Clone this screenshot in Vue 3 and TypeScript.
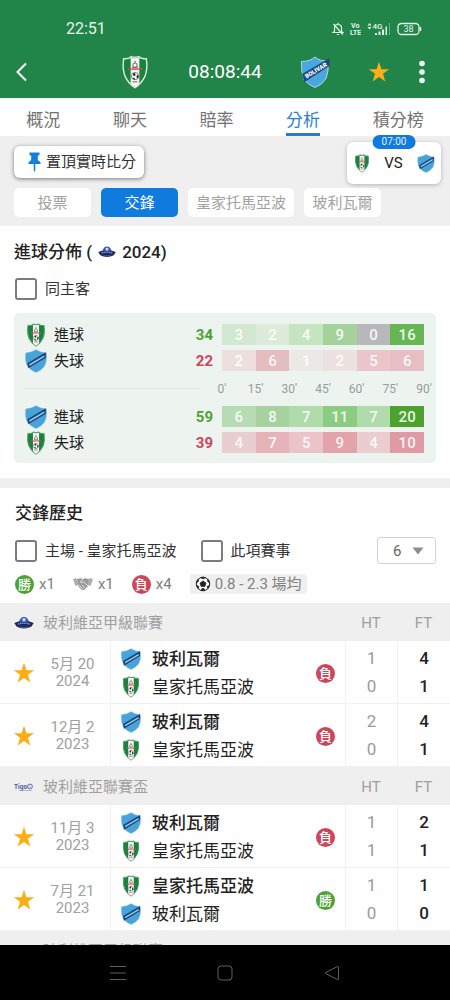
<script setup lang="ts">
import { ref } from 'vue'

type Team = 'tomayapo' | 'bolivar'

const names: Record<Team, string> = { tomayapo: '皇家托馬亞波', bolivar: '玻利瓦爾' }

const tabs = ['概況', '聊天', '賠率', '分析', '積分榜']
const activeTab = ref('分析')

const filters = ['投票', '交鋒', '皇家托馬亞波', '玻利瓦爾']
const activeFilter = ref('交鋒')

interface Heat {
  team: Team
  label: string
  kind: 'for' | 'against'
  total: number
  cells: [number, string][]
}

const upper: Heat[] = [
  {
    team: 'tomayapo', label: '進球', kind: 'for', total: 34,
    cells: [[3, '#d3e8d0'], [2, '#dcebda'], [4, '#c5e4c0'], [9, '#a4d29a'], [0, '#b8b8ba'], [16, '#66b653']],
  },
  {
    team: 'bolivar', label: '失球', kind: 'against', total: 22,
    cells: [[2, '#ecdfde'], [6, '#e4bdc0'], [1, '#ebe9e6'], [2, '#ece2e0'], [5, '#eac6cb'], [6, '#e6bec3']],
  },
]
const lower: Heat[] = [
  {
    team: 'bolivar', label: '進球', kind: 'for', total: 59,
    cells: [[6, '#b6dcb3'], [8, '#a6d2a1'], [7, '#b0dbab'], [11, '#8bcb82'], [7, '#b0dbab'], [20, '#4ba32d']],
  },
  {
    team: 'tomayapo', label: '失球', kind: 'against', total: 39,
    cells: [[4, '#e8ced0'], [7, '#e6b3b8'], [5, '#ebc4c9'], [9, '#e3a3aa'], [4, '#e9cdd0'], [10, '#e09aa3']],
  },
]
const minutes = ["0'", "15'", "30'", "45'", "60'", "75'", "90'"]

interface Match {
  day: string
  year: string
  result: '勝' | '負'
  sides: { team: Team; ht: number; ft: number }[]
}

const leagues: { name: string; logo: string; matches: Match[] }[] = [
  {
    name: '玻利維亞甲級聯賽', logo: 'league',
    matches: [
      { day: '5月 20', year: '2024', result: '負', sides: [{ team: 'bolivar', ht: 1, ft: 4 }, { team: 'tomayapo', ht: 0, ft: 1 }] },
      { day: '12月 2', year: '2023', result: '負', sides: [{ team: 'bolivar', ht: 2, ft: 4 }, { team: 'tomayapo', ht: 0, ft: 1 }] },
    ],
  },
  {
    name: '玻利維亞聯賽盃', logo: 'tigo',
    matches: [
      { day: '11月 3', year: '2023', result: '負', sides: [{ team: 'bolivar', ht: 1, ft: 2 }, { team: 'tomayapo', ht: 1, ft: 1 }] },
      { day: '7月 21', year: '2023', result: '勝', sides: [{ team: 'tomayapo', ht: 1, ft: 1 }, { team: 'bolivar', ht: 0, ft: 0 }] },
    ],
  },
  { name: '玻利維亞甲級聯賽', logo: 'league', matches: [] },
]

const sameVenue = ref(false)
const homeOnly = ref(false)
const thisCompetition = ref(false)
const count = ref('6')
</script>

<template>
  <div class="screen">
    <svg class="defs" aria-hidden="true">
      <symbol id="tomayapo" viewBox="0 0 26 33">
        <path class="edge" d="M2 3.5Q7.500 4 9.500 1.500Q13 3 16.500 1.500Q18.500 4 24 3.500Q25.500 14 22.500 21Q19.500 27.500 13 31.800Q6.500 27.500 3.500 21Q.5 14 2 3.500Z" fill="#17843c" stroke-width="1.400" />
        <path d="M8.800 2.500Q13 3.800 17.200 2.500V27.500Q15.500 30 13 31.300Q10.500 30 8.800 27.500Z" fill="#f4f5f1" />
        <path d="M11 9Q13 6.500 15 9M11 9.500V12H15V9.500M12.300 6.500H14" fill="none" stroke="#77655b" stroke-width="1.100" />
        <path d="M6 13.700H20" stroke="#d8474f" stroke-width="1.400" />
        <circle cx="13" cy="20.500" r="3.500" fill="#fff" stroke="#555" stroke-width=".7" />
        <path d="M11 18L13 17.400L13.600 19.600L11.600 20.600ZM14.500 20L16.300 19.500V22L14.700 22.600ZM10.500 22L12.500 22.400L13.200 24L11.500 23.600Z" fill="#222" />
        <path d="M10.500 26H15.500" stroke="#a55" />
      </symbol>
      <symbol id="bolivar" viewBox="0 0 30 33">
        <path d="M1 5.500Q9 5 15 1Q21 5 29 5.500Q30.500 18 26 24.500Q21.500 30 15 32.300Q8.500 30 4 24.500Q-.5 18 1 5.500Z" fill="#48a3da" stroke="#6fb4dc" stroke-width=".7" />
        <path d="M3 19.500L28.500 4.500V12L4.500 26.500Z" fill="#1d4478" />
        <path d="M6 22L26.500 9.800" stroke="#8fcdf0" stroke-width="2.200" />
      </symbol>
      <symbol id="league" viewBox="0 0 20 12">
        <path d="M.3 6Q10 1.500 19.700 6L17.500 9.500Q10 13.500 2.500 9.500Z" fill="#20265d" />
        <path d="M5 5.500Q6 0 10 0Q14 0 15 5.500Z" fill="#2d56ae" />
        <circle cx="10" cy="2.800" r="1.800" fill="#c3d9f4" />
        <path d="M4 7.200Q10 5.300 16 7.200" fill="none" stroke="#8797cc" stroke-width="1.400" stroke-dasharray="1.500 .6" />
        <path d="M6 9.900Q10 11 14 9.900" fill="none" stroke="#476fae" stroke-width=".8" />
      </symbol>
      <symbol id="tigo" viewBox="0 0 20 12">
        <text x="0" y="8" font-family="Roboto, sans-serif" font-size="6.500" font-weight="700" fill="#515a9c">Tigo</text>
        <circle cx="16" cy="5.500" r="2.400" fill="#e8eaf4" stroke="#626ba8" stroke-width="1" />
        <path d="M14.800 4.500L17 6.500M5 9.500H18" stroke="#8c92bc" stroke-width=".6" />
      </symbol>
      <symbol id="star" viewBox="0 0 22 22">
        <path d="M11 .8L13.500 8.200H21.200L15 12.800L17.300 20.600L11 16L4.700 20.600L7 12.800L.8 8.200H8.500Z" fill="#fbaf17" />
      </symbol>
    </svg>

    <header class="top">
      <div class="status">
        <span class="clock">22:51</span>
        <div class="signals">
          <svg width="12" height="14" viewBox="0 0 12 14" fill="none" stroke="#e4f6e8" stroke-width="1.200">
            <path d="M2.500 9.500V6Q2.500 2.500 6 2.500Q9.500 2.500 9.500 6V9.500L11 10.500H1L2.500 9.500M6 .8V2.500M4.800 12.500H7.200M1.500 2L10.800 12.500" />
          </svg>
          <svg width="11" height="14" viewBox="0 0 11 14" fill="#e4f6e8" font-family="Roboto, sans-serif" font-weight="700" font-size="7">
            <text x="1" y="6">Vo</text>
            <text x="0" y="13">LTE</text>
          </svg>
          <svg width="24" height="14" viewBox="0 0 24 14" fill="#e4f6e8">
            <path d="M2.500 1L4.500 3.500H.5ZM2.500 7.500L.5 5H4.500ZM8 11H10V13H8ZM11.500 9.500H13.500V13H11.500ZM15 7.500H17V13H15ZM18.500 4.500H20V13H18.500Z" />
            <path d="M22 1H23V13H22Z" opacity=".35" />
            <text x="5.500" y="7" font-family="Roboto, sans-serif" font-size="8" font-weight="500">4G</text>
          </svg>
          <svg width="25" height="14" viewBox="0 0 25 14">
            <rect x="1" y="1.500" width="21" height="11" rx="3.500" fill="none" stroke="#e4f6e8" stroke-width="1.300" />
            <path d="M23.500 5V9" stroke="#e4f6e8" stroke-width="1.500" />
            <text x="11.500" y="10" text-anchor="middle" fill="#e4f6e8" font-family="Roboto, sans-serif" font-size="9">38</text>
          </svg>
        </div>
      </div>
      <div class="appbar">
        <button class="icon" aria-label="返回">
          <svg width="12" height="20" viewBox="0 0 12 20"><path d="M10 1.500L1.500 10L10 18.500" fill="none" stroke="#fff" stroke-width="2" /></svg>
        </button>
        <div class="fixture">
          <svg width="30" height="34"><use href="#tomayapo" /></svg>
          <span>08:08:44</span>
          <svg width="30" height="34" viewBox="0 0 30 33">
            <path d="M1.500 6Q10 6 15 1.500Q20 6 28 5.500Q29 16 26 23Q22 29.500 15 32Q8 29.500 4 24Q1 17 1.500 6Z" fill="#48a7df" stroke="#b2d8e8" />
            <path d="M2 18.500L29.500 2.500V10.500L4.500 26.500Z" fill="#1b4a7d" />
            <text x="16" y="17" transform="rotate(-31 16 15)" text-anchor="middle" font-family="Roboto, sans-serif" font-size="6" font-weight="900" fill="#fff">BOLIVAR</text>
          </svg>
        </div>
        <div class="actions">
          <button class="icon" aria-label="收藏"><svg width="22" height="22"><use href="#star" /></svg></button>
          <button class="icon" aria-label="更多">
            <svg width="8" height="24" viewBox="0 0 8 24" fill="#f2fff4"><circle cx="4" cy="3.500" r="2.800" /><circle cx="4" cy="12" r="2.800" /><circle cx="4" cy="20.500" r="2.800" /></svg>
          </button>
        </div>
      </div>
    </header>

    <nav class="tabs">
      <button v-for="t in tabs" :key="t" :class="{ active: t === activeTab }" @click="activeTab = t"><span>{{ t }}</span></button>
    </nav>

    <main>
      <section class="filterbar">
        <div class="pinrow">
          <button class="pin">
            <svg width="13" height="20" viewBox="0 0 13 20" fill="#1480d8"><path d="M1.500.5H11.500V3L9.800 3.800V8L12.500 10.300V12H7.300V18L6.500 20L5.700 18V12H.5V10.300L3.200 8V3.800L1.500 3Z" /></svg>
            置頂實時比分
          </button>
          <div class="mini">
            <span class="kickoff">07:00</span>
            <svg width="16" height="19"><use href="#tomayapo" /></svg>
            <span>VS</span>
            <svg width="18" height="19"><use href="#bolivar" /></svg>
          </div>
        </div>
        <div class="chips">
          <button v-for="f in filters" :key="f" :class="{ active: f === activeFilter }" @click="activeFilter = f">{{ f }}</button>
        </div>
      </section>

      <section class="goals">
        <h2>進球分佈 ( <svg width="18" height="12"><use href="#league" /></svg> 2024)</h2>
        <label class="check"><input v-model="sameVenue" type="checkbox" />同主客</label>
        <div class="panel">
          <table class="heat">
            <colgroup><col class="c-team" /><col class="c-total" /><col v-for="n in 6" :key="n" /></colgroup>
            <tbody>
              <tr v-for="row in upper" :key="row.label">
                <th scope="row"><div class="side"><svg width="24" height="24"><use :href="'#' + row.team" /></svg>{{ row.label }}</div></th>
                <td :class="['total', row.kind]">{{ row.total }}</td>
                <td v-for="(c, i) in row.cells" :key="i" class="cell" :style="{ background: c[1] }">{{ c[0] }}</td>
              </tr>
              <tr>
                <td colspan="2"><hr /></td>
                <td colspan="6"><div class="axis"><span v-for="m in minutes" :key="m">{{ m }}</span></div></td>
              </tr>
              <tr v-for="row in lower" :key="row.label">
                <th scope="row"><div class="side"><svg width="24" height="24"><use :href="'#' + row.team" /></svg>{{ row.label }}</div></th>
                <td :class="['total', row.kind]">{{ row.total }}</td>
                <td v-for="(c, i) in row.cells" :key="i" class="cell" :style="{ background: c[1] }">{{ c[0] }}</td>
              </tr>
            </tbody>
          </table>
        </div>
      </section>

      <section class="history">
        <h2>交鋒歷史</h2>
        <div class="options">
          <label class="check"><input v-model="homeOnly" type="checkbox" />主場 - 皇家托馬亞波</label>
          <label class="check"><input v-model="thisCompetition" type="checkbox" />此項賽事</label>
          <div class="picker">
            <select v-model="count" aria-label="場數"><option>6</option><option>10</option><option>20</option></select>
            <svg width="12" height="8" viewBox="0 0 12 8"><path d="M.5.5H11.500L6 7.500Z" fill="#8d8d8d" /></svg>
          </div>
        </div>
        <div class="summary">
          <span class="tally"><i class="badge win">勝</i>x1</span>
          <span class="tally">
            <svg width="20" height="14" viewBox="0 0 20 14">
              <path d="M0 2L3.500 1L4.500 8L2.500 9ZM20 2L16.500 1L15.500 8L17.500 9Z" fill="#aaa" />
              <path d="M4 2L8 1.200L10 2L12 1.200L16 2L15.500 8.500L11 13L9 13L4.500 8.500Z" fill="#999" />
              <path d="M10 2L7.300 5Q8.300 6.500 10.500 4.800L15 9M9 8L12 11M6.500 8.500L10 12M5 7.500L7 9.500" fill="none" stroke="#f5f5f5" stroke-width=".8" />
            </svg>x1</span>
          <span class="tally"><i class="badge loss">負</i>x4</span>
          <span class="average">
            <svg width="16" height="16" viewBox="0 0 16 16">
              <circle cx="8" cy="8" r="6.700" fill="#fff" stroke="#222" stroke-width="1" />
              <path d="M8 4.900L11 7L9.900 10.500H6.100L5 7ZM5.500 1.600L8 3L10.500 1.600L8 1ZM1.300 7L3.500 5.300L3.300 3L1.500 5.500ZM14.700 7L12.500 5.300L12.700 3L14.500 5.500ZM3 12.500L4 10.500L1.600 9.500ZM13 12.500L12 10.500L14.400 9.500ZM6 14.600L7 12.500H9L10 14.600Z" fill="#222" stroke="#222" stroke-width=".7" />
            </svg>
            0.8 - 2.3 場均
          </span>
        </div>

        <table class="matches">
          <colgroup><col class="c-date" /><col /><col class="c-ht" /><col class="c-ft" /></colgroup>
          <tbody v-for="(league, k) in leagues" :key="k">
            <tr class="league">
              <th colspan="2" scope="colgroup"><div class="league-name"><svg width="20" height="12"><use :href="'#' + league.logo" /></svg>{{ league.name }}</div></th>
              <th scope="col">HT</th>
              <th scope="col">FT</th>
            </tr>
            <tr v-for="m in league.matches" :key="m.day" class="match">
              <td>
                <div class="when">
                  <button class="icon" aria-label="收藏"><svg width="22" height="22"><use href="#star" /></svg></button>
                  <time>{{ m.day }}<br />{{ m.year }}</time>
                </div>
              </td>
              <td>
                <div class="game">
                  <div class="teams">
                    <div v-for="(s, i) in m.sides" :key="s.team" :class="{ strong: i === 0 }"><svg width="20" height="22"><use :href="'#' + s.team" /></svg>{{ names[s.team] }}</div>
                  </div>
                  <i :class="['badge', m.result === '勝' ? 'win' : 'loss']">{{ m.result }}</i>
                </div>
              </td>
              <td class="score half"><div v-for="s in m.sides" :key="s.team">{{ s.ht }}</div></td>
              <td class="score full"><div v-for="s in m.sides" :key="s.team">{{ s.ft }}</div></td>
            </tr>
          </tbody>
        </table>
      </section>
    </main>

    <footer class="sysnav">
      <button class="icon" aria-label="選單"><svg width="16" height="16" viewBox="0 0 16 16"><path d="M0 1.500H16M0 8H16M0 14.500H16" stroke="#5e5e5e" /></svg></button>
      <button class="icon" aria-label="主頁"><svg width="16" height="16" viewBox="0 0 16 16"><rect x="1" y="1" width="14" height="14" rx="3" fill="none" stroke="#5e5e5e" /></svg></button>
      <button class="icon" aria-label="上一頁"><svg width="16" height="16" viewBox="0 0 16 16"><path d="M14.500 2V14Q14.500 15 13.500 14.500L1.500 8.500Q1 8 1.500 7.500L13.500 1.500Q14.500 1 14.500 2Z" fill="none" stroke="#5e5e5e" /></svg></button>
    </footer>
  </div>
</template>

<style>
body {
  margin: 0;
}
</style>

<style scoped>
.screen {
  display: flex;
  flex-direction: column;
  height: 100vh;
  overflow: hidden;
  background: #efefef;
  color: #222;
  font: 15px/20px Roboto, "Noto Sans CJK TC", sans-serif;
}
.defs {
  position: absolute;
  width: 0;
  height: 0;
}
.edge {
  stroke: var(--crest-edge, #4f9c68);
}
button {
  border: 0;
  padding: 0;
  margin: 0;
  background: none;
  color: inherit;
  font: inherit;
  cursor: pointer;
}
svg {
  display: block;
  flex: none;
}
.icon {
  display: flex;
}
.top {
  flex: none;
  background: #218448;
  color: #fff;
}
.status {
  display: flex;
  align-items: center;
  justify-content: space-between;
  padding: 19px 28px 6px 66px;
}
.clock {
  font-size: 16px;
  color: #e4f6e8;
}
.signals {
  display: flex;
  gap: 6px;
}
.appbar {
  display: grid;
  grid-template-columns: 1fr auto 1fr;
  align-items: center;
  height: 53px;
  padding: 0 16px;
}
.fixture {
  --crest-edge: #d9eadb;
  display: flex;
  align-items: center;
  gap: 38px;
  font-size: 19px;
}
.actions {
  display: flex;
  align-items: center;
  justify-content: flex-end;
  gap: 28px;
  padding-right: 8px;
}
.tabs {
  display: flex;
  flex: none;
  background: #fff;
  font-size: 17px;
  color: #737373;
}
.tabs button {
  flex: 1 1 auto;
  display: flex;
  justify-content: center;
}
.tabs span {
  line-height: 20px;
  padding: 12px 0 3px;
  border-bottom: 3px solid transparent;
}
.tabs .active span {
  color: #2a7fcb;
  border-color: #2a7cc4;
}
main {
  flex: 1 1 0;
  min-height: 0;
  overflow-y: auto;
  scrollbar-width: none;
  margin-top: -4px;
  padding-top: 4px;
}
.filterbar {
  padding: 6px 9px 9px 14px;
}
.pinrow {
  display: flex;
  justify-content: space-between;
  align-items: flex-start;
}
.pin {
  display: flex;
  align-items: center;
  gap: 5px;
  height: 32px;
  margin-top: 4px;
  padding: 0 8px 0 14px;
  border-radius: 6px;
  background: #fff;
  box-shadow: 0 1px 4px #00000080;
  color: #333;
}
.mini {
  position: relative;
  display: flex;
  align-items: center;
  justify-content: space-between;
  box-sizing: border-box;
  width: 94px;
  height: 42px;
  padding: 0 6px 0 7px;
  border-radius: 6px;
  background: #fff;
  box-shadow: 0 1px 4px #00000040;
}
.kickoff {
  position: absolute;
  top: -7px;
  left: 50%;
  transform: translateX(-50%);
  padding: 0 9px;
  border-radius: 7px;
  background: #0f7bdc;
  color: #e3f1ff;
  font-size: 10px;
  line-height: 14px;
}
.chips {
  display: flex;
  gap: 10px;
  margin-top: 4px;
}
.chips button {
  min-width: 77px;
  height: 29px;
  padding: 0 8px;
  border-radius: 5px;
  background: #fff;
  color: #a2a2a2;
  white-space: nowrap;
}
.chips .active {
  background: #0f7bdc;
  color: #fff;
}
.goals,
.history {
  background: #fff;
}
.goals {
  padding: 15px 14px 15px;
  margin-bottom: 10px;
}
h2 {
  display: flex;
  align-items: center;
  gap: 6px;
  margin: 0;
  font-size: 17px;
  line-height: 22px;
  font-weight: 500;
}
.check {
  display: flex;
  align-items: center;
  gap: 8px;
  color: #333;
}
.check input {
  appearance: none;
  box-sizing: border-box;
  width: 22px;
  height: 22px;
  margin: 0;
  border: 2px solid #7c7c7c;
  border-radius: 3px;
  background: #fff;
}
.check input:checked {
  background: #0f7bdc;
}
.goals .check {
  margin: 15px 1px 13px;
}
.panel {
  padding: 6px 12px 5px 10px;
  border-radius: 5px;
  background: #edf4f0;
}
table {
  width: 100%;
  table-layout: fixed;
}
th,
td {
  padding: 0;
  font-weight: 400;
}
.heat {
  border-spacing: 0 5px;
}
.c-team {
  width: 152px;
}
.c-total {
  width: 46px;
}
.side {
  display: flex;
  align-items: center;
  gap: 6px;
  height: 21px;
}
.total {
  padding-right: 9px;
  text-align: right;
  font-weight: 700;
}
.for {
  color: #4ba336;
}
.against {
  color: #cf4459;
}
.cell {
  text-align: center;
  font-weight: 500;
  color: #ffffffe6;
}
hr {
  margin: 0 22px 0 0;
  border: 0;
  border-top: 1px solid #dfe5e1;
}
.axis {
  display: flex;
  justify-content: space-between;
  align-items: center;
  height: 25px;
  font-size: 12px;
  color: #979c99;
}
.axis span {
  display: flex;
  justify-content: center;
  width: 0;
}
.history h2 {
  padding: 14px 15px 0;
}
.options {
  display: flex;
  align-items: center;
  gap: 24px;
  padding: 13px 14px 0 15px;
}
.picker {
  position: relative;
  margin-left: auto;
}
.picker select {
  appearance: none;
  display: block;
  width: 59px;
  height: 27px;
  padding: 0 0 0 15px;
  border: 1px solid #d3d3d3;
  border-radius: 3px;
  background: #fff;
  color: #666;
  font: inherit;
}
.picker svg {
  position: absolute;
  right: 12px;
  top: 10px;
  pointer-events: none;
}
.summary {
  display: flex;
  align-items: center;
  gap: 18px;
  padding: 10px 15px 9px;
  color: #808080;
}
.tally {
  display: flex;
  align-items: center;
  gap: 5px;
}
.badge {
  flex: none;
  width: 19px;
  height: 19px;
  border-radius: 50%;
  color: #fff;
  font-size: 13px;
  line-height: 19px;
  font-style: normal;
  font-weight: 500;
  text-align: center;
}
.win {
  background: #4ba336;
}
.loss {
  background: #cc4659;
}
.average {
  display: flex;
  align-items: center;
  gap: 4px;
  padding: 0 5px;
  border-radius: 3px;
  background: #efefef;
}
.matches {
  border-spacing: 0;
  border-collapse: separate;
}
.c-date {
  width: 110px;
}
.c-ht {
  width: 52px;
}
.c-ft {
  width: 53px;
}
.league th {
  box-sizing: border-box;
  height: 38px;
  padding-top: 2px;
  background: #efefef;
  color: #a0a0a0;
}
.league-name {
  display: flex;
  align-items: center;
  gap: 9px;
  padding-left: 14px;
}
.match td {
  box-sizing: border-box;
  height: 63px;
  border-bottom: 1px solid #f1f1f1;
}
.match td + td {
  border-left: 1px solid #f1f1f1;
}
.when {
  display: flex;
  align-items: center;
  padding: 2px 0 0 13px;
}
.when time {
  flex: 1;
  color: #a0a0a0;
  line-height: 17px;
  text-align: center;
}
.game {
  display: flex;
  align-items: center;
  justify-content: space-between;
  padding: 2px 10px 0;
}
.teams {
  font-size: 17px;
  line-height: 28px;
}
.teams div {
  display: flex;
  align-items: center;
  gap: 11px;
}
.strong {
  font-weight: 500;
}
.score {
  font-size: 17px;
  line-height: 28px;
  text-align: center;
}
.half {
  color: #9b9b9b;
}
.full {
  font-weight: 500;
}
.sysnav {
  display: flex;
  flex: none;
  align-items: center;
  justify-content: center;
  gap: 91px;
  height: 55px;
  background: #000;
}
</style>
